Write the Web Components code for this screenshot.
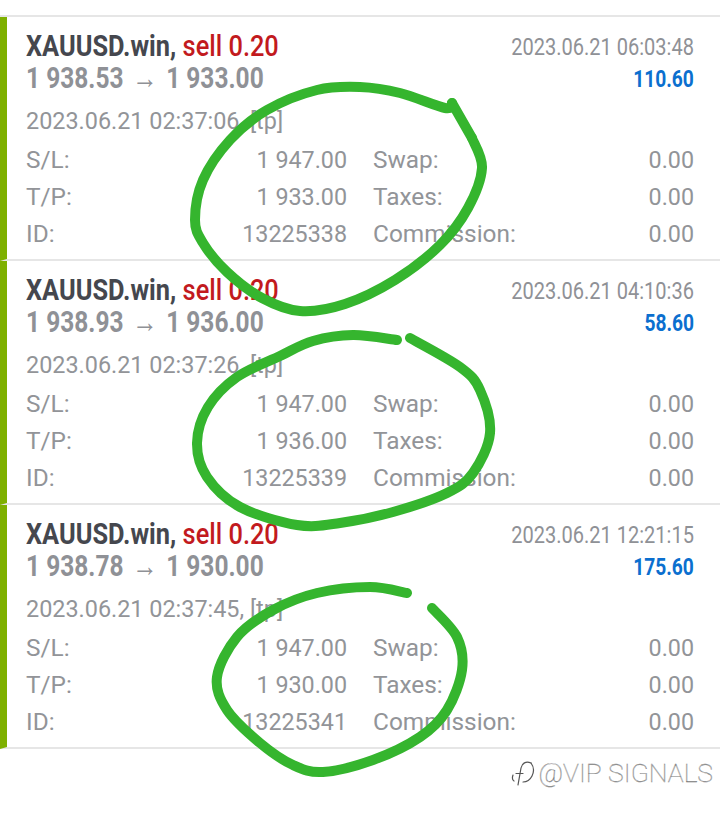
<!DOCTYPE html>
<html>
<head>
<meta charset="utf-8">
<style>
    html, body { margin: 0; background: #fff; }
    body { width: 720px; height: 815px; overflow: hidden; font-family: Roboto, "Liberation Sans", sans-serif; }
</style>
</head>
<body>
<trade-list>
    <trade-row symbol="XAUUSD.win," side="sell 0.20" open="1 938.53" close="1 933.00" closed="2023.06.21 06:03:48" profit="110.60" opened="2023.06.21 02:37:06, [tp]" sl="1 947.00" tp="1 933.00" ticket="13225338"></trade-row>
    <trade-row symbol="XAUUSD.win," side="sell 0.20" open="1 938.93" close="1 936.00" closed="2023.06.21 04:10:36" profit="58.60" opened="2023.06.21 02:37:26, [tp]" sl="1 947.00" tp="1 936.00" ticket="13225339"></trade-row>
    <trade-row symbol="XAUUSD.win," side="sell 0.20" open="1 938.78" close="1 930.00" closed="2023.06.21 12:21:15" profit="175.60" opened="2023.06.21 02:37:45, [tp]" sl="1 947.00" tp="1 930.00" ticket="13225341"></trade-row>
    <marker-rings></marker-rings>
</trade-list>
<water-mark>@VIP SIGNALS</water-mark>

<script>
class TradeList extends HTMLElement {
    constructor() {
        super();
        this.attachShadow({ mode: 'open' });
        this.shadowRoot.innerHTML = `
        <style>
            :host {
                display: block;
                margin-top: 15px;
                border-top: 2px solid #e6e6e6;
            }
        </style>
        <slot></slot>`;
    }
}

class TradeRow extends HTMLElement {
    constructor() {
        super();
        this.attachShadow({ mode: 'open' });
    }

    connectedCallback() {
        const a = (name) => this.getAttribute(name);
        this.shadowRoot.innerHTML = `
        <style>
            :host {
                display: block;
                box-sizing: border-box;
                height: 244px;
                padding: 13px 26px 0 19px;
                border-left: 7px solid #7eb000;
                border-bottom: 2px solid #e6e6e6;
                color: #929498;
                font-size: 24.4px;
            }
            .narrow { display: inline-block; white-space: nowrap; transform-origin: left center; }
            .head { display: flex; justify-content: space-between; height: 32px; line-height: 32px; }
            .title { font-size: 29px; font-weight: 700; color: #45474e; transform: scaleX(.875); }
            .title span { color: #c21a1e; font-weight: 500; }
            .price { font-size: 29px; font-weight: 700; color: #8f9196; transform: scaleX(.845); }
            .price i { display: inline-block; font-style: normal; font-weight: 400; font-size: 30px; margin: 0 3px; }
            .closed { font-size: 23px; margin-top: 2px; transform: scaleX(.87); transform-origin: right center; color: #8f9196; }
            .profit { font-size: 24px; margin-top: 1px; font-weight: 700; color: #0b6fcf; transform: scaleX(.8); transform-origin: right center; }
            .opened { height: 37px; line-height: 37px; margin-top: 9px; font-size: 23.4px; }
            .grid { display: grid; grid-template-columns: 1fr 1fr; column-gap: 26px; grid-auto-rows: 37px; line-height: 37px; margin-top: 1px; }
            .cell { display: flex; justify-content: space-between; align-items: baseline; }
            .num { font-size: 23.3px; }
        </style>
        <div class="head">
            <div class="narrow title">${a('symbol')} <span>${a('side')}</span></div>
            <div class="narrow closed">${a('closed')}</div>
        </div>
        <div class="head">
            <div class="narrow price">${a('open')} <i>→</i> ${a('close')}</div>
            <div class="narrow profit">${a('profit')}</div>
        </div>
        <div class="opened">${a('opened')}</div>
        <div class="grid">
            <div class="cell"><span>S/L:</span><span class="num">${a('sl')}</span></div>
            <div class="cell"><span>Swap:</span><span class="num">0.00</span></div>
            <div class="cell"><span>T/P:</span><span class="num">${a('tp')}</span></div>
            <div class="cell"><span>Taxes:</span><span class="num">0.00</span></div>
            <div class="cell"><span>ID:</span><span class="num">${a('ticket')}</span></div>
            <div class="cell"><span>Commission:</span><span class="num">0.00</span></div>
        </div>`;
    }
}

// hand drawn rings, points taken from the picture (page coordinates)
const RINGS = [
    [[452,103],[445,108],[400,93],[360,87],[317,90],[267,110],[230,140],[203,180],[195,220],[203,243],[227,272],[262,298],[300,311],[345,304],[395,280],[440,245],[468,208],[482,168],[472,138]],
    [[397,340],[353,335],[313,341],[280,356],[237,377],[208,407],[197,443],[207,477],[240,507],[297,525],[340,523],[393,512],[447,493],[473,473],[490,433],[480,390],[460,367],[410,338]],
    [[407,593],[370,587],[317,593],[273,610],[237,637],[217,677],[227,710],[260,743],[293,765],[323,772],[373,760],[420,737],[447,710],[462,670],[457,637],[432,608]]
];

function smoothPath(pts) {
    let d = `M${pts[0][0]} ${pts[0][1]}`;
    for (let i = 0; i < pts.length - 1; i++) {
        const p0 = pts[i - 1] || pts[i], p1 = pts[i], p2 = pts[i + 1], p3 = pts[i + 2] || p2;
        const c1 = [p1[0] + (p2[0] - p0[0]) / 6, p1[1] + (p2[1] - p0[1]) / 6];
        const c2 = [p2[0] - (p3[0] - p1[0]) / 6, p2[1] - (p3[1] - p1[1]) / 6];
        d += `C${c1[0].toFixed(1)} ${c1[1].toFixed(1)} ${c2[0].toFixed(1)} ${c2[1].toFixed(1)} ${p2[0]} ${p2[1]}`;
    }
    return d;
}

class MarkerRings extends HTMLElement {
    constructor() {
        super();
        this.attachShadow({ mode: 'open' });
        const paths = RINGS.concat([[[452,103],[472,138]]]).map((r) => `<path d="${smoothPath(r)}"/>`).join('');
        this.shadowRoot.innerHTML = `
        <style>
            :host { position: absolute; left: 0; top: 0; width: 720px; height: 815px; pointer-events: none; }
            svg { display: block; }
            path { fill: none; stroke: #35b52e; stroke-width: 10; stroke-linecap: round; stroke-linejoin: round; }
        </style>
        <svg width="720" height="815" viewBox="0 0 720 815">${paths}</svg>`;
    }
}

class WaterMark extends HTMLElement {
    constructor() {
        super();
        this.attachShadow({ mode: 'open' });
        this.shadowRoot.innerHTML = `
        <style>
            :host {
                display: flex;
                justify-content: flex-end;
                align-items: center;
                gap: 3px;
                margin-top: 3px;
                padding-right: 7px;
                height: 40px;
                font-size: 26.5px;
                font-weight: 100;
                color: #fff;
                -webkit-text-stroke: .4px #777;
            }
            svg { display: block; margin-top: 2px; }
            path { fill: none; stroke: #555; stroke-width: 1.2; stroke-linecap: round; }
        </style>
        <svg width="24" height="26" viewBox="0 0 24 26">
            <path d="M20 3C15 1 11 3 10 8L7 25"/>
            <path d="M5 13.5H12"/>
            <path d="M20 3C23 7 23 12 21 16C19 20 16 22 12 22"/>
            <path d="M2 15C1 18 1 20 3 21"/>
        </svg>
        <span><slot></slot></span>`;
    }
}

customElements.define('trade-list', TradeList);
customElements.define('trade-row', TradeRow);
customElements.define('marker-rings', MarkerRings);
customElements.define('water-mark', WaterMark);
</script>
</body>
</html>
